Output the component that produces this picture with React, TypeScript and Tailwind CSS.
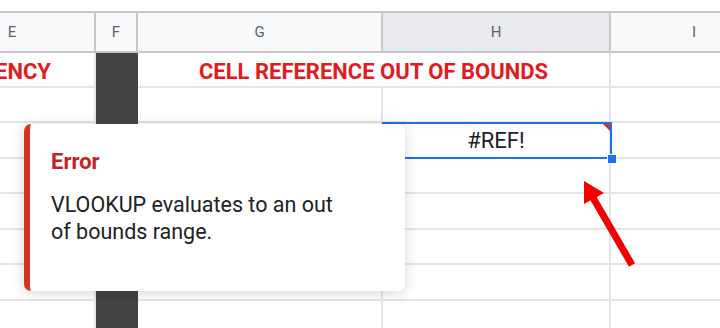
import React from "react";

const rows = [
  "h-[35px]",
  "h-[35px]",
  "h-[36px]",
  "h-[35px]",
  "h-[36px]",
  "h-[35px]",
  "h-[36px]",
  "h-[36px]",
];

const cols = [
  { key: "E", w: "w-[166px] -ml-[70px]" },
  { key: "F", w: "w-[42px]" },
  { key: "G", w: "w-[245px]" },
  { key: "H", w: "w-[228px]" },
  { key: "I", w: "w-[168px]" },
];

const HeaderRow = () => (
  <div className="flex h-[42px] border-y-2 border-[#c7c7c7] bg-[#f8f9fa]">
    {cols.map((c) => (
      <div
        key={c.key}
        className={`${c.w} shrink-0 flex items-center justify-center border-r-2 border-[#c7c7c7] pt-[1px] text-[15px] text-[#5f6368] ${
          c.key === "H" ? "bg-[#e8eaed]" : ""
        }`}
      >
        {c.key}
      </div>
    ))}
  </div>
);

const BodyRow = ({ h, index }: { h: string; index: number }) => (
  <div className={`flex ${h} border-b-2 border-[#e5e5e5]`}>
    <div className="w-[166px] -ml-[70px] shrink-0 border-r-2 border-[#e5e5e5] overflow-hidden flex items-center justify-end pr-[43px] pt-[3px]">
      {index === 0 && (
        <span className="whitespace-nowrap text-[22px] font-bold text-[#e01c1c]">ENCY</span>
      )}
    </div>
    <div className="w-[42px] shrink-0 bg-[#434343] -mb-[2px]" />
    {index === 0 ? (
      <div className="w-[473px] shrink-0 border-r-2 border-[#e5e5e5] flex items-center justify-center pt-[3px] text-[22px] font-bold text-[#e01c1c] whitespace-nowrap">
        CELL REFERENCE OUT OF BOUNDS
      </div>
    ) : (
      <>
        <div className="w-[245px] shrink-0 border-r-2 border-[#e5e5e5]" />
        <div className="w-[228px] shrink-0 border-r-2 border-[#e5e5e5] flex items-center justify-center text-[22px] text-[#202124]">
          {index === 2 ? "#REF!" : ""}
        </div>
      </>
    )}
    <div className="w-[168px] shrink-0" />
  </div>
);

export default function App() {
  return (
    <div
      className="relative w-[720px] h-[328px] overflow-hidden bg-white pt-[11px]"
      style={{ fontFamily: "Roboto, 'Liberation Sans', sans-serif" }}
    >
      <HeaderRow />
      {rows.map((h, i) => (
        <BodyRow key={i} h={h} index={i} />
      ))}

      {/* selected cell H3 */}
      <div className="absolute left-[382px] top-[122px] w-[230px] h-[37px] border-2 border-[#1a73e8]">
        <div className="absolute right-0 top-0 w-0 h-0 border-t-[7px] border-l-[7px] border-t-[#d93025] border-l-transparent" />
        <div className="absolute -right-[7px] -bottom-[7px] w-[10px] h-[10px] bg-[#1a73e8] border border-white" />
      </div>

      {/* error popover */}
      <div className="absolute left-[24px] top-[124px] w-[381px] h-[167px] rounded-[7px] bg-white border-l-[6px] border-[#d93025] shadow-[0_2px_14px_rgba(0,0,0,0.16)] pl-[21px] pt-[24px]">
        <div className="text-[22px] font-bold text-[#c5221f] leading-[28px]">Error</div>
        <div className="mt-[15px] w-[295px] text-[21.5px] leading-[27px] text-[#202124]">
          VLOOKUP evaluates to an out of bounds range.
        </div>
      </div>

      {/* annotation arrow */}
      <svg className="absolute left-0 top-0" width="720" height="328" viewBox="0 0 720 328">
        <line x1="632" y1="265" x2="592" y2="196" stroke="#f20000" strokeWidth="7" />
        <polygon points="584,181 584,204 604,193" fill="#f20000" />
      </svg>
    </div>
  );
}
